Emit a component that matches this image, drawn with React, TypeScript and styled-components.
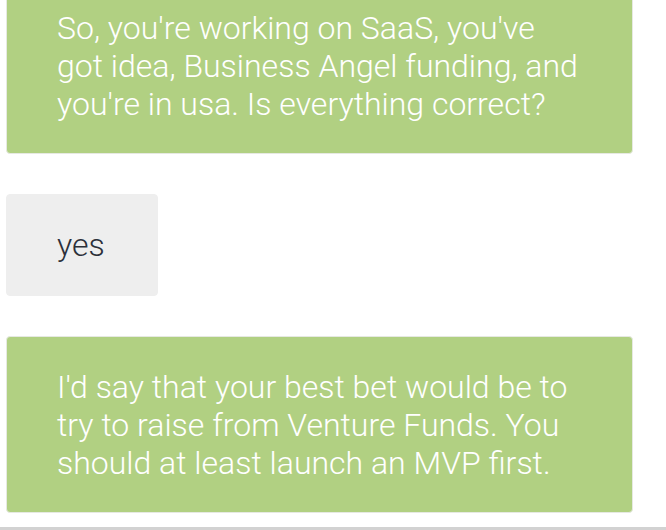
import * as React from 'react';
import styled, {createGlobalStyle} from 'styled-components';

const GlobalStyle = createGlobalStyle`
  html, body {
    margin: 0;
    padding: 0;
    background: #ffffff;
  }
  body {
    font-family: Roboto, 'Liberation Sans', sans-serif;
  }
`;

type Message = {
  from: 'bot' | 'user';
  text: string;
};

const messages: Message[] = [
  {
    from: 'bot',
    text: "So, you're working on SaaS, you've got idea, Business Angel funding, and you're in usa. Is everything correct?",
  },
  {from: 'user', text: 'yes'},
  {
    from: 'bot',
    text: "I'd say that your best bet would be to try to raise from Venture Funds. You should at least launch an MVP first.",
  },
];

const App = () => {
  return (
    <Page>
      <GlobalStyle />
      <Thread>
        {messages.map((message, i) => (
          <Bubble key={i} $from={message.from}>
            {message.text}
          </Bubble>
        ))}
      </Thread>
      <Composer />
    </Page>
  );
};

export default App;

const Page = styled.div`
  display: flex;
  flex-direction: column;
  height: 530px;
  overflow: hidden;
`;

const Thread = styled.div`
  flex: 1;
  min-height: 0;
  overflow: hidden;
  display: flex;
  flex-direction: column;
  justify-content: flex-end;
  gap: 40px;
  padding: 0 33px 14px 6px;
`;

const Bubble = styled.div<{$from: 'bot' | 'user'}>`
  flex-shrink: 0;
  align-self: ${(p) => (p.$from === 'bot' ? 'stretch' : 'flex-start')};
  padding: ${(p) => (p.$from === 'bot' ? '31px 50px 30px' : '31px 52px 31px 50px')};
  border-radius: 4px;
  border: 1px solid ${(p) => (p.$from === 'bot' ? '#e6e9e2' : '#eeeeee')};
  background: ${(p) => (p.$from === 'bot' ? '#b1d082' : '#eeeeee')};
  color: ${(p) => (p.$from === 'bot' ? '#ffffff' : '#2c303a')};
  font-size: 32px;
  font-weight: 300;
  line-height: 38px;
`;

const Composer = styled.div`
  flex-shrink: 0;
  height: 3px;
  background: #d2d2d2;
`;
